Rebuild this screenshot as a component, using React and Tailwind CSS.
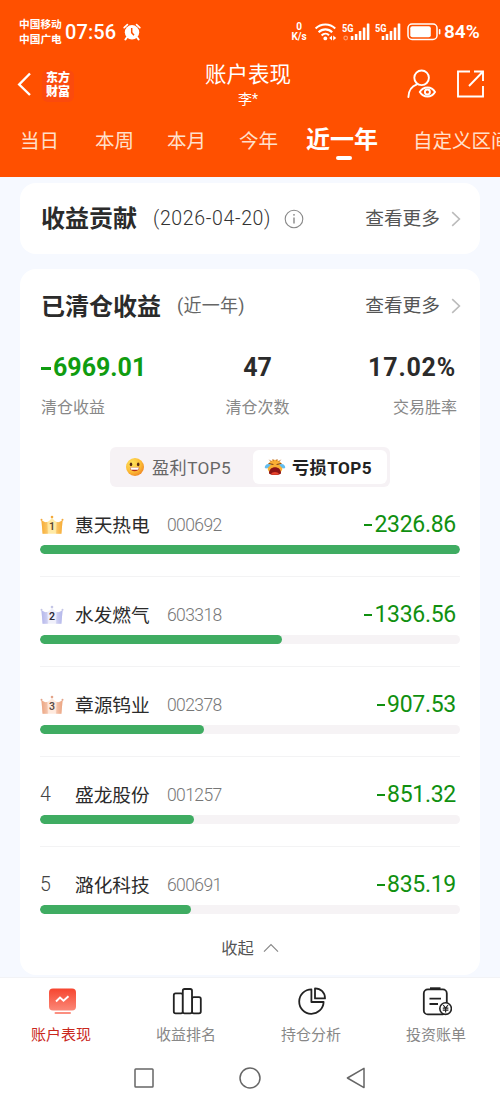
import React from 'react';

const periods = [
  { label: '当日', className: 'ml-[20px] w-[40px]' },
  { label: '本周', className: 'ml-[35px] w-[40px]' },
  { label: '本月', className: 'ml-[32px] w-[40px]' },
  { label: '今年', className: 'ml-[32px] w-[40px]' },
];

const stocks = [
  { rank: 1, name: '惠天热电', code: '000692', value: '2326.86', width: 420 },
  { rank: 2, name: '水发燃气', code: '603318', value: '1336.56', width: 241.5 },
  { rank: 3, name: '章源钨业', code: '002378', value: '907.53', width: 164 },
  { rank: 4, name: '盛龙股份', code: '001257', value: '851.32', width: 154 },
  { rank: 5, name: '潞化科技', code: '600691', value: '835.19', width: 151 },
];

const crownColors = {
  1: { light: '#ffeaa6', dark: '#f7ab35', tip: '#f3a93c', text: '#5b4630' },
  2: { light: '#f0f0fb', dark: '#b3b6ea', tip: '#c4c6e6', text: '#2d2a3a' },
  3: { light: '#ffeade', dark: '#eba481', tip: '#e3a48a', text: '#5b4a46' },
};

const Crown = ({ rank }) => {
  const c = crownColors[rank];
  const id = `crown-${rank}`;
  return (
    <svg viewBox="0 0 24 20" className="h-5 w-6">
      <defs>
        <linearGradient id={id} x1="0" y1="0" x2="1" y2="0">
          <stop offset="0" stopColor={c.dark} />
          <stop offset="0.35" stopColor={c.light} />
          <stop offset="0.65" stopColor={c.light} />
          <stop offset="1" stopColor={c.dark} />
        </linearGradient>
      </defs>
      <path d="M1.4 4.8 C3.5 7.2 5.5 7.4 7.2 7 C9.4 6.4 10.6 4.6 12 2.8 C13.4 4.6 14.6 6.4 16.8 7 C18.5 7.4 20.5 7.2 22.6 4.8 L21.4 18.8 H2.6 Z" fill={`url(#${id})`} />
      <path d="M1.4 4.8 C3.5 7.2 5.5 7.4 7.2 7 L7.8 18.8 H2.6 Z M22.6 4.8 C20.5 7.2 18.5 7.4 16.8 7 L16.2 18.8 H21.4 Z" fill={c.dark} opacity="0.45" />
      <circle cx="1.5" cy="4.8" r="1" fill={c.tip} />
      <circle cx="12" cy="2" r="1.3" fill={c.tip} />
      <circle cx="22.5" cy="4.8" r="1" fill={c.tip} />
      <text x="12" y="15.4" textAnchor="middle" fontSize="10.5" fontWeight="600" fill={c.text}>
        {rank}
      </text>
    </svg>
  );
};

const Signal = ({ dot }) => (
  <svg viewBox="0 0 28 18" className="h-[18px] w-7 shrink-0" fill="#fff">
    <text x="0" y="8.6" fontSize="10" fontWeight="700" textLength="11.5" lengthAdjust="spacingAndGlyphs">5G</text>
    {dot && <circle cx="3.7" cy="15" r="1.8" fill="none" stroke="#ff9b6b" strokeWidth="1.2" />}
    <g transform={dot ? 'translate(2.3 0)' : 'translate(0.2 0)'}>
      <rect x="6.5" y="13" width="2.6" height="4" rx="0.5" />
      <rect x="10.5" y="11" width="2.6" height="6" rx="0.5" />
      <rect x="14.5" y="8" width="2.6" height="9" rx="0.5" />
      <rect x="18.5" y="4.5" width="2.6" height="12.5" rx="0.5" />
      <rect x="22.5" y="0.5" width="2.6" height="16.5" rx="0.5" />
    </g>
  </svg>
);

const StatusBar = () => (
  <div className="flex h-[64px] items-center text-white">
    <div className="ml-[19px] w-[44px] whitespace-nowrap text-[10.7px] leading-[15px] font-bold">
      <div>中国移动</div>
      <div>中国广电</div>
    </div>
    <div className="ml-[2px] w-[52px] text-[20px] leading-6 font-medium tracking-[0.1px]">07:56</div>
    <svg viewBox="0 0 18 18" className="ml-[6px] h-[18px] w-[18px]">
      <circle cx="9" cy="9.3" r="7.2" fill="#fff" />
      <path d="M1.2 4.6 L4.4 1.6 M16.8 4.6 L13.6 1.6" stroke="#fff" strokeWidth="1.7" strokeLinecap="round" />
      <path d="M3.8 14.5 L2.4 16.5 M14.2 14.5 L15.6 16.5" stroke="#fff" strokeWidth="2" strokeLinecap="round" />
      <path d="M8.7 5 V9.6 L11 12.2" stroke="#ff5000" strokeWidth="1.5" fill="none" />
    </svg>
    <div className="ml-[148px] w-[20px] text-center text-[10px] leading-[10px] font-bold">
      <div className="h-[10px]">0</div>
      <div className="h-[10px]">K/s</div>
    </div>
    <svg viewBox="0 0 24 18" className="ml-[5px] h-[18px] w-6" fill="none" stroke="#fff" strokeWidth="2.1">
      <path d="M1.6 5.6 C7 0.2 15.8 0.2 21.2 5.6" />
      <path d="M4.6 9.2 C8.4 5.4 14.4 5.4 18.2 9.2" />
      <path d="M7.6 12.4 C9.8 10.2 13 10.2 15 12.2" />
      <circle cx="11.3" cy="15.4" r="1.9" fill="#fff" stroke="none" />
      <path d="M15.2 15 L18 12.4 V17.6 Z M22.2 15 L19.2 12.4 V17.6 Z" fill="#fff" stroke="none" />
    </svg>
    <div className="ml-[4px] flex gap-[5px]">
      <Signal dot />
      <Signal />
    </div>
    <svg viewBox="0 0 34 18" className="ml-[4px] h-[18px] w-[34px] shrink-0">
      <rect x="1" y="1" width="29" height="15.5" rx="4" fill="none" stroke="#fff" strokeWidth="1.5" />
      <rect x="3.3" y="3.3" width="20.5" height="11" rx="2" fill="#fff" />
      <rect x="31.8" y="6" width="1.6" height="5.5" rx="0.8" fill="#fff" />
    </svg>
    <div className="ml-[3px] text-[19px] leading-6 font-semibold">84%</div>
  </div>
);

const NavHeader = () => (
  <div className="flex h-[48px] text-white">
    <div className="flex w-[180px] items-start pt-[6px]">
      <svg viewBox="0 0 16 26" className="ml-[16px] h-[26px] w-4" fill="none" stroke="#fff" strokeWidth="2.4">
        <path d="M14 3.5 L3.2 14.5 L14 25" />
      </svg>
      <div className="ml-[10px] h-[32px] w-[32px] rounded-md bg-[#fb4a0d] pt-[2px] text-center font-['Liberation_Serif','Noto_Sans_CJK_SC',serif] text-[12px] leading-[13.5px] font-black">
        <div>东方</div>
        <div>财富</div>
      </div>
    </div>
    <div className="flex w-[136px] flex-col items-center">
      <div className="text-[21.5px] leading-[22px]">账户表现</div>
      <div className="mt-[5px] text-[14px] leading-4">李*</div>
    </div>
    <div className="flex flex-1 pt-[4px]">
      <svg viewBox="0 0 30 32" className="ml-[91px] h-8 w-[30px]" fill="none" stroke="#fff" strokeWidth="1.9" strokeLinecap="round">
        <circle cx="14.6" cy="9.8" r="7.3" />
        <path d="M1.4 29 C1.6 23 4.8 18.2 10 16.4" />
        <path d="M12.8 24 C16.5 18 24.5 18 28 24 C24.5 30 16.5 30 12.8 24 Z" />
        <circle cx="20.4" cy="24" r="2.5" />
      </svg>
      <svg viewBox="0 0 30 32" className="ml-[19px] h-8 w-[30px]" fill="none" stroke="#fff" strokeWidth="1.9">
        <path d="M14 3.5 H2 V28.5 H27 V18" />
        <path d="M18 3.5 H27 V13 M27 3.5 L13 18" />
      </svg>
    </div>
  </div>
);

const PeriodTabs = () => (
  <div className="flex h-[65px] overflow-hidden pt-[15px] text-[19.5px] leading-[30px] whitespace-nowrap text-[#ffe0cc]">
    {periods.map((p) => (
      <div key={p.label} className={`shrink-0 ${p.className}`}>{p.label}</div>
    ))}
    <div className="ml-[25px] flex w-[76px] shrink-0 flex-col items-center">
      <div className="-mt-[2px] text-[24px] leading-[30px] font-bold text-white">近一年</div>
      <div className="mt-[1px] ml-1 h-[4px] w-4 rounded-full bg-white" />
    </div>
    <div className="ml-[33px] shrink-0">自定义区间</div>
  </div>
);

const More = () => (
  <div className="flex items-center text-[18.7px] leading-7 text-[#555]">
    查看更多
    <svg viewBox="0 0 10 16" className="ml-[11px] h-4 w-[10px]" fill="none" stroke="#bbb" strokeWidth="1.6">
      <path d="M1.2 1.2 L8.4 8 L1.2 14.8" />
    </svg>
  </div>
);

const HappyFace = () => (
  <svg viewBox="0 0 20 20" className="h-5 w-5">
    <defs>
      <radialGradient id="happy" cx="0.35" cy="0.3" r="0.8">
        <stop offset="0" stopColor="#ffe45e" />
        <stop offset="0.6" stopColor="#fcbb35" />
        <stop offset="1" stopColor="#ee7d22" />
      </radialGradient>
    </defs>
    <circle cx="10" cy="10" r="9" fill="url(#happy)" />
    <ellipse cx="6" cy="7.4" rx="1.3" ry="1.8" fill="#5a2d13" />
    <ellipse cx="13.2" cy="7.4" rx="1.3" ry="1.8" fill="#5a2d13" />
    <path d="M4.8 10.6 H14.4 C14 15.6 5.2 15.6 4.8 10.6 Z" fill="#b32c1b" />
    <path d="M5.2 10.6 H14 L13.2 12.8 H6 Z" fill="#fff" />
  </svg>
);

const CryFace = () => (
  <svg viewBox="0 0 22 20" className="h-5 w-[22px]">
    <circle cx="11" cy="10.3" r="7.6" fill="#fbb033" />
    <path d="M5.4 2.8 L7.4 5 M8.8 2 L9.6 4.2 M16.6 2.8 L14.6 5 M13.2 2 L12.4 4.2" stroke="#c0702a" strokeWidth="0.9" />
    <path d="M5 6.6 L9 7.4 M17 6.6 L13 7.4" stroke="#7a3d18" strokeWidth="1" strokeLinecap="round" />
    <path d="M5 16.4 C4.6 8.2 17.4 8.2 17 16.4 C14 18.4 8 18.4 5 16.4 Z" fill="#8e1515" />
    <path d="M7 17.2 C8 14.4 14 14.4 15 17.2 C13 18 9 18 7 17.2 Z" fill="#e8452f" />
    <path d="M6.8 7.6 C3.6 5.8 0.4 7.8 0.8 11 C3.2 12.6 4.8 10 6.8 7.6 Z M15.2 7.6 C18.4 5.8 21.6 7.8 21.2 11 C18.8 12.6 17.2 10 15.2 7.6 Z" fill="#62bdf0" />
  </svg>
);

const StockRow = ({ stock, last }) => (
  <div className={last ? 'h-[73px]' : 'h-[90px]'}>
    <div className="flex h-[41px] items-center">
      <div className="w-[35px]">
        {stock.rank <= 3 ? (
          <Crown rank={stock.rank} />
        ) : (
          <div className="pt-[1px] text-[19.5px] leading-6 font-light text-[#444]">{stock.rank}</div>
        )}
      </div>
      <div className="w-[92px] pt-[2px] text-[18.7px] leading-7 text-[#2b2b2b]">{stock.name}</div>
      <div className="text-[17.5px] leading-6 font-light tracking-[-0.6px] text-[#777]">{stock.code}</div>
      <div className="mr-[4px] ml-auto flex items-center pt-px text-[23px] leading-7 tracking-[-0.3px] text-[#109010]">
        <span className="mr-[2px] h-[2px] w-[8px] bg-[#109010]" />
        {stock.value}
      </div>
    </div>
    <div className="h-[9px] overflow-hidden rounded-full bg-[#f6f3f5]">
      <div className="h-full rounded-full bg-[#3fac62]" style={{ width: stock.width }} />
    </div>
    {!last && <div className="mt-[22px] h-px bg-[#f3f3f4]" />}
  </div>
);

const tabIcons = {
  perf: (
    <svg viewBox="0 0 30 30" className="h-[30px] w-[30px]">
      <defs>
        <linearGradient id="perf" x1="0" y1="0" x2="0" y2="1">
          <stop offset="0" stopColor="#f6452f" />
          <stop offset="1" stopColor="#fb8878" />
        </linearGradient>
      </defs>
      <rect x="2" y="2.5" width="27" height="22" rx="4" fill="url(#perf)" />
      <path d="M9 15.5 L13 11.5 L16.5 14.8 L21.5 10.2" fill="none" stroke="#fff" strokeWidth="1.9" />
      <rect x="7.5" y="26" width="16.5" height="2" rx="1" fill="#fb8f80" />
    </svg>
  ),
  rank: (
    <svg viewBox="0 0 30 30" className="h-[30px] w-[30px]" fill="none" stroke="#222" strokeWidth="1.8">
      <rect x="1.8" y="7.4" width="9" height="20" rx="1.8" />
      <rect x="20" y="11.2" width="8.8" height="16.2" rx="1.8" />
      <rect x="10.8" y="3" width="9.2" height="24.4" rx="1.8" fill="#fff" />
    </svg>
  ),
  pie: (
    <svg viewBox="0 0 30 30" className="h-[30px] w-[30px]" fill="none" stroke="#222" strokeWidth="1.8" strokeLinejoin="round">
      <path d="M14.4 3.4 A12.2 12.2 0 1 0 26.6 16 H14.4 Z" />
      <path d="M18 2.4 V12.4 H28 C28 6.6 23.8 2.4 18 2.4 Z" />
    </svg>
  ),
  bill: (
    <svg viewBox="0 0 30 30" className="h-[30px] w-[30px]" fill="none" stroke="#222" strokeWidth="1.8">
      <rect x="1.8" y="3.4" width="23" height="25" rx="4" />
      <path d="M8 2.6 H18.5" strokeWidth="2.6" />
      <path d="M7.5 12.6 H19 M7.5 18 H16" />
      <circle cx="23.6" cy="22.6" r="5.8" fill="#fff" strokeWidth="1.6" />
      <path d="M21.2 19 L23.6 22 L26 19 M23.6 22 V26.4 M20.8 22.2 H26.4 M20.8 24.2 H26.4" strokeWidth="1.2" />
    </svg>
  ),
};

const bottomTabs = [
  { key: 'perf', label: '账户表现', active: true },
  { key: 'rank', label: '收益排名' },
  { key: 'pie', label: '持仓分析' },
  { key: 'bill', label: '投资账单' },
];

const App = () => {
  return (
    <div className="flex h-[1105px] w-[500px] flex-col overflow-hidden bg-[#f6f9ff] font-['Roboto','Noto_Sans_CJK_SC',sans-serif]">
      {/* Header */}
      <div className="h-[177px] shrink-0 bg-[#ff5000]">
        <StatusBar />
        <NavHeader />
        <PeriodTabs />
      </div>

      <div className="h-[800px] shrink-0 overflow-hidden px-5 pt-[6px]">
        {/* Contribution card */}
        <div className="flex h-[71px] items-center rounded-2xl bg-white pr-[19px] pl-[21px]">
          <div className="flex w-full items-center pt-[1px]">
            <div className="text-[24px] leading-8 font-bold text-[#2b2b2b]">收益贡献</div>
            <div className="ml-[16px] text-[19.5px] leading-7 font-light tracking-[0.65px] text-[#333]">(2026-04-20)</div>
            <svg viewBox="0 0 20 20" className="ml-[13px] h-5 w-5" fill="none" stroke="#888" strokeWidth="1.1">
              <circle cx="10" cy="10" r="8.8" />
              <path d="M10 8.6 V14.6" strokeWidth="1.4" />
              <circle cx="10" cy="5.8" r="0.9" fill="#888" stroke="none" />
            </svg>
            <div className="ml-auto"><More /></div>
          </div>
        </div>

        {/* Closed positions card */}
        <div className="mt-[15px] h-[706px] rounded-2xl bg-white px-5">
          <div className="-mr-px flex h-[72px] items-center pt-px pl-px">
            <div className="pt-[2px] text-[24px] leading-8 font-bold text-[#2b2b2b]">已清仓收益</div>
            <div className="ml-[16px] text-[18px] leading-7 tracking-[0.3px] text-[#666]">(近一年)</div>
            <div className="ml-auto"><More /></div>
          </div>

          <div className="grid h-[106px] grid-cols-3 pt-[11px] pl-px text-[25px] leading-8 font-bold text-[#2b2b2b]">
            <div>
              <div className="flex items-center text-[#109c10]">
                <span className="mr-[2px] h-[3px] w-[10px] bg-[#109c10]" />
                6969.01
              </div>
              <div className="mt-[12px] text-[16px] leading-6 font-normal text-[#888]">清仓收益</div>
            </div>
            <div className="pl-[14px] text-center">
              <div>47</div>
              <div className="mt-[12px] text-[16px] leading-6 font-normal text-[#888]">清仓次数</div>
            </div>
            <div className="pr-[3px] text-right">
              <div className="pr-[1px] tracking-[0.8px]">17.02%</div>
              <div className="mt-[12px] text-[16px] leading-6 font-normal text-[#888]">交易胜率</div>
            </div>
          </div>

          {/* Profit / loss switch */}
          <div className="mx-auto flex h-[40px] w-[280px] rounded-md bg-[#f6f2f5] p-[3px] text-[17.2px] leading-[34px]">
            <div className="flex w-[140px] items-center pl-[12px] tracking-[0.4px] text-[#666]">
              <HappyFace />
              <span className="ml-[7px] pt-px">盈利TOP5</span>
            </div>
            <div className="flex flex-1 items-center rounded-md bg-white pl-[11px] font-bold tracking-[0.4px] text-[#222]">
              <CryFace />
              <span className="ml-[6px] pt-px">亏损TOP5</span>
            </div>
          </div>

          <div className="pt-[17px]">
            {stocks.map((s, i) => (
              <StockRow key={s.code} stock={s} last={i === stocks.length - 1} />
            ))}
          </div>

          <div className="-mt-[2px] flex items-center justify-center text-[16.3px] leading-7 text-[#555]">
            收起
            <svg viewBox="0 0 16 10" className="-mt-[3px] ml-[9px] h-[10px] w-4" fill="none" stroke="#888" strokeWidth="1.2">
              <path d="M1 8.6 L8 1.6 L15 8.6" />
            </svg>
          </div>
        </div>
      </div>

      {/* Bottom tabs */}
      <div className="flex h-[74px] shrink-0 border-t border-[#f2f3f6] bg-white">
        {bottomTabs.map((t) => (
          <div key={t.key} className="flex w-[125px] shrink-0 flex-col items-center pt-[8px] pr-px">
            {tabIcons[t.key]}
            <div className={`mt-[9px] mr-[2px] text-[15px] leading-5 ${t.active ? 'text-[#c9281c]' : 'text-[#888]'}`}>
              {t.label}
            </div>
          </div>
        ))}
      </div>

      {/* System navigation */}
      <div className="flex flex-1 items-center justify-center gap-[84px] bg-white pb-[1px]">
        <svg viewBox="0 0 22 22" className="h-[22px] w-[22px]" fill="none" stroke="#666" strokeWidth="1.5">
          <rect x="2" y="2" width="18" height="18" rx="0.8" />
        </svg>
        <svg viewBox="0 0 22 22" className="h-[22px] w-[22px]" fill="none" stroke="#666" strokeWidth="1.5">
          <circle cx="11" cy="11" r="10" />
        </svg>
        <svg viewBox="0 0 22 22" className="h-[22px] w-[22px]" fill="none" stroke="#666" strokeWidth="1.5" strokeLinejoin="round">
          <path d="M2.4 11 L19 1.4 V20.6 Z" />
        </svg>
      </div>
    </div>
  );
};

export default App;
